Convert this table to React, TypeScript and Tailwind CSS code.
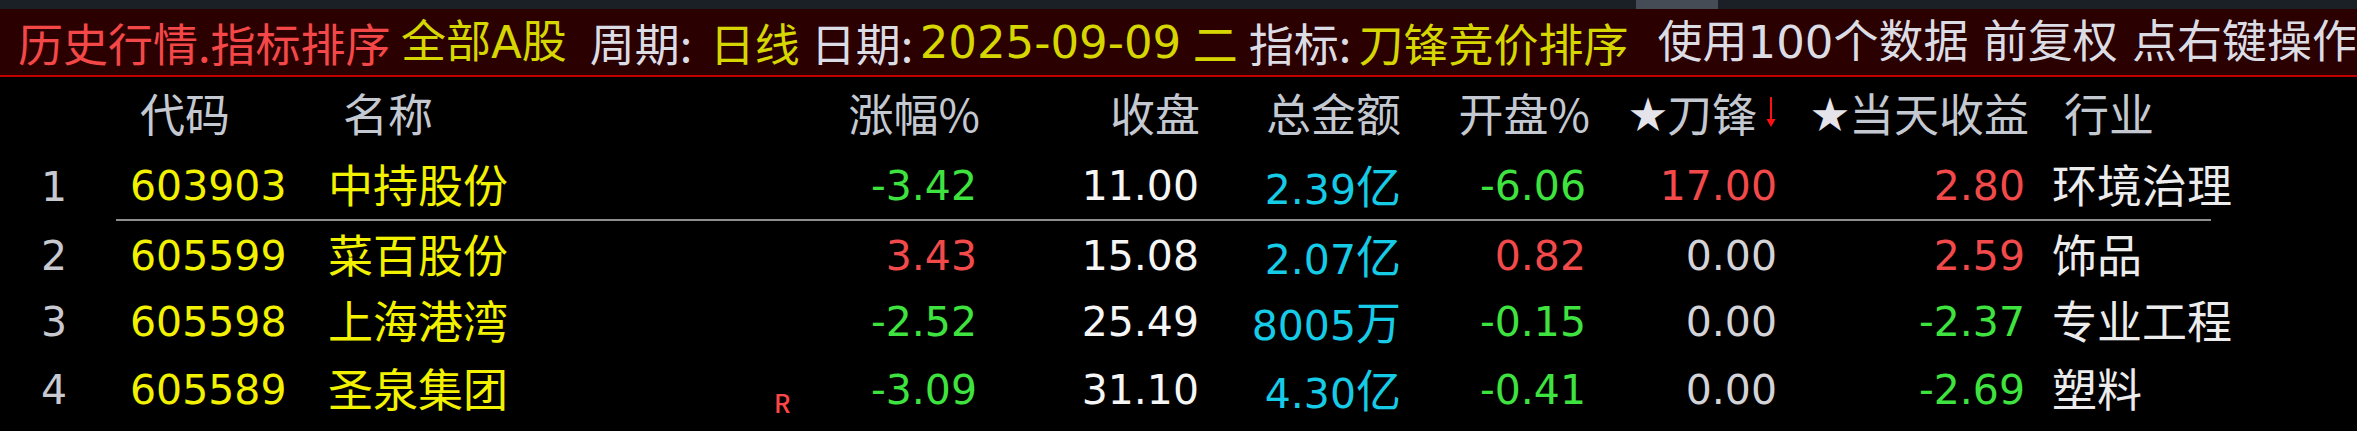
const GREEN = "text-[#3fe33f]";
const RED = "text-[#f24a4a]";
const GRAY = "text-[#d4d4d8]";

// digits in the original terminal font are wider than Noto's latin
const NUM = "font-['DejaVu_Sans','Noto_Sans_CJK_SC',sans-serif] text-[41px] pt-[6px]";
const TNUM = "font-['DejaVu_Sans','Noto_Sans_CJK_SC',sans-serif]";

type Row = {
  n: number;
  code: string;
  name: string;
  zf: [string, string];
  close: string;
  amt: [string, string];
  open: [string, string];
  df: [string, string];
  inc: [string, string];
  ind: string;
};

const rows: Row[] = [
  { n: 1, code: "603903", name: "中持股份", zf: ["-3.42", GREEN], close: "11.00", amt: ["2.39", "亿"], open: ["-6.06", GREEN], df: ["17.00", RED], inc: ["2.80", RED], ind: "环境治理" },
  { n: 2, code: "605599", name: "菜百股份", zf: ["3.43", RED], close: "15.08", amt: ["2.07", "亿"], open: ["0.82", RED], df: ["0.00", GRAY], inc: ["2.59", RED], ind: "饰品" },
  { n: 3, code: "605598", name: "上海港湾", zf: ["-2.52", GREEN], close: "25.49", amt: ["8005", "万"], open: ["-0.15", GREEN], df: ["0.00", GRAY], inc: ["-2.37", GREEN], ind: "专业工程" },
  { n: 4, code: "605589", name: "圣泉集团", zf: ["-3.09", GREEN], close: "31.10", amt: ["4.30", "亿"], open: ["-0.41", GREEN], df: ["0.00", GRAY], inc: ["-2.69", GREEN], ind: "塑料" },
];

function Star() {
  return <span className="text-[38px] leading-none text-[#e4e4ea]">★</span>;
}

function DataRow({ r, height, divider }: { r: Row; height: string; divider?: boolean }) {
  return (
    <div className={`flex items-center ${height}`}>
      <div className={`w-[116px] pl-[41px] text-[#c8c8d0] ${NUM}`}>{r.n}</div>
      <div className={`flex h-full w-[2095px] items-center ${divider ? "border-b-2 border-[#8e8e8e]" : ""}`}>
        <div className={`w-[202px] pl-[14px] text-[#f2f200] ${NUM}`}>{r.code}</div>
        <div className="w-[202px] pl-[10px] text-[#f2f200]">{r.name}</div>
        <div className={`w-[460px] pr-[3px] text-right ${r.zf[1]} ${NUM}`}>{r.zf[0]}</div>
        <div className={`w-[220px] pr-[1px] text-right text-[#f6f6f6] ${NUM}`}>{r.close}</div>
        <div className={`w-[201px] pr-[0px] text-right text-[#16cbe6] ${NUM}`}>
          {r.amt[0]}
          <span className="font-['Noto_Sans_CJK_SC'] text-[45px]">{r.amt[1]}</span>
        </div>
        <div className={`w-[189px] pr-[4px] text-right ${r.open[1]} ${NUM}`}>{r.open[0]}</div>
        <div className={`w-[191px] pr-[4px] text-right ${r.df[1]} ${NUM}`}>{r.df[0]}</div>
        <div className={`w-[248px] pr-[4px] text-right ${r.inc[1]} ${NUM}`}>{r.inc[0]}</div>
        <div className="w-[182px] pl-[23px] whitespace-nowrap text-[#ececec]">{r.ind}</div>
      </div>
    </div>
  );
}

export default function App() {
  return (
    <div className="h-[431px] w-[2357px] overflow-hidden bg-black font-['Noto_Sans_CJK_SC',sans-serif] text-[45px] leading-none">
      {/* window strip */}
      <div className="flex h-[9px] bg-[#1b2027]">
        <div className="w-[1636px]" />
        <div className="w-[82px] bg-[#454c55]" />
      </div>

      {/* title bar */}
      <div className="flex h-[68px] items-center whitespace-nowrap border-b-2 border-[#c00000] bg-[#2a0000] pl-[18px]">
        <span className="w-[383px] text-[#f44848]">历史行情.指标排序</span>
        <span className={`w-[189px] text-[#d6d600] ${TNUM}`}>全部A股</span>
        <span className="w-[120px] text-[#dcdce4]">周期:</span>
        <span className="w-[101px] text-[#d6d600]">日线</span>
        <span className="w-[109px] text-[#dcdce4]">日期:</span>
        <span className={`w-[273px] text-[#d6d600] ${TNUM}`}>2025-09-09</span>
        <span className="w-[56px] text-[#d6d600]">二</span>
        <span className="w-[110px] text-[#dcdce4]">指标:</span>
        <span className="w-[299px] text-[#d6d600]">刀锋竞价排序</span>
        <span className={`text-[#dcdce4] ${TNUM}`}>使用100个数据 前复权 点右键操作</span>
      </div>

      {/* table */}
      <div className="relative">
        <div className="flex h-[70px] items-center text-[#c4c8d0]">
          <div className="w-[116px]" />
          <div className="w-[202px] pl-[24px]">代码</div>
          <div className="w-[202px] pl-[25px]">名称</div>
          <div className="w-[460px] text-right">涨幅%</div>
          <div className="w-[220px] text-right">收盘</div>
          <div className="w-[201px] text-right">总金额</div>
          <div className="w-[189px] text-right">开盘%</div>
          <div className="flex w-[191px] items-center justify-end pr-[4px]">
            <Star />
            <span>刀锋</span>
            <svg width="12" height="34" viewBox="0 0 12 34" className="ml-[8px]">
              <line x1="6" y1="2" x2="6" y2="30" stroke="#ff1010" strokeWidth="2" />
              <path d="M1.5 24 L6 32 L10.5 24 Z" fill="#ff1010" />
            </svg>
          </div>
          <div className="flex w-[248px] items-center justify-end">
            <Star />
            <span>当天收益</span>
          </div>
          <div className="w-[182px] pl-[35px]">行业</div>
        </div>

        <DataRow r={rows[0]} height="h-[74px]" divider />
        <DataRow r={rows[1]} height="h-[64px]" />
        <DataRow r={rows[2]} height="h-[68px]" />
        <DataRow r={rows[3]} height="h-[68px]" />

        <span className="absolute left-[774px] top-[313px] text-[25px] font-medium text-[#ff4646]">R</span>
      </div>
    </div>
  );
}
